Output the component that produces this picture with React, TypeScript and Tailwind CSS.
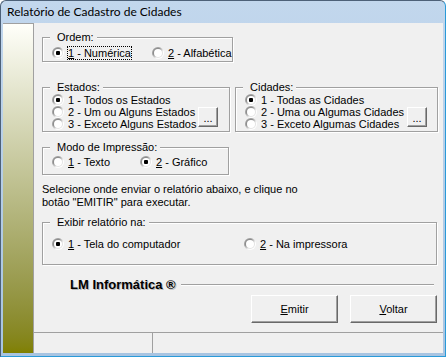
import React from "react";

function Radio({ checked }: { checked?: boolean }) {
  return (
    <svg width="12" height="12" viewBox="0 0 12 12" className="shrink-0">
      <defs>
        <linearGradient id="rOuter" x1="0" y1="0" x2="1" y2="1">
          <stop offset="0.35" stopColor="#a0a0a0" />
          <stop offset="0.65" stopColor="#ffffff" />
        </linearGradient>
        <linearGradient id="rInner" x1="0" y1="0" x2="1" y2="1">
          <stop offset="0.35" stopColor="#8c8c8c" />
          <stop offset="0.65" stopColor="#e3e3e3" />
        </linearGradient>
      </defs>
      <circle cx="6" cy="6" r="6" fill="url(#rOuter)" />
      <circle cx="6" cy="6" r="5" fill="url(#rInner)" />
      <circle cx="6" cy="6" r="4" fill="#fff" />
      {checked && <rect x="4" y="4" width="4" height="4" rx="1" fill="#000" />}
    </svg>
  );
}

function Option({ checked, className = "", children }: { checked?: boolean; className?: string; children: React.ReactNode }) {
  return (
    <div className={"flex items-center gap-[4px] " + className}>
      <Radio checked={checked} />
      <span className="whitespace-nowrap">{children}</span>
    </div>
  );
}

function Group({ title, className = "", children }: { title: string; className?: string; children: React.ReactNode }) {
  return (
    <fieldset className={"border border-[#a0a0a0] shadow-[inset_1px_1px_0_#fff,1px_1px_0_#fff] pl-[9px] " + className}>
      <legend className="-ml-[2px] pl-[7px] pr-[3px] bg-[#f0f0f0] leading-[13px]">{title}</legend>
      {children}
    </fieldset>
  );
}

function Btn({ className = "", children }: { className?: string; children: React.ReactNode }) {
  return (
    <div className={"flex items-center justify-center bg-[#f0f0f0] border border-t-white border-l-white border-r-[#696969] border-b-[#696969] shadow-[inset_-1px_-1px_0_#a0a0a0] " + className}>
      {children}
    </div>
  );
}

export default function App() {
  return (
    <div className="w-[446px] h-[357px] flex flex-col rounded-t-[6px] border border-[#4d6178] border-r-[#2a9ad8] border-b-[#2a9ad8] bg-gradient-to-b from-[#c2d7ed] to-[#a8c4e1] overflow-hidden">
      <div className="h-[22px] pl-[6px] flex items-center text-[12px] text-black font-['Lato',sans-serif]">
        Relatório de Cadastro de Cidades
      </div>
      <div className="flex-1 mx-[2px] mb-[3px] bg-[#f0f0f0] flex text-[11px] text-black font-['Liberation_Sans',Arial,sans-serif]">
        <div className="w-[31px] border-t border-r border-[#a0a0a0] bg-gradient-to-b from-[#fffffa] to-[#808000]" />
        <div className="flex-1 flex flex-col">
          <div className="flex-1 pl-[8px] flex flex-col items-start">
            <Group title="Ordem:" className="w-[190px] mt-[8px]">
              <div className="flex items-center h-[14px] mt-[2px] mb-[1px]">
                <Option checked className="w-[100px]">
                  <span className="outline outline-1 outline-dotted outline-black">
                    <u>1</u> - Numérica
                  </span>
                </Option>
                <Option>
                  <u>2</u> - Alfabética
                </Option>
              </div>
            </Group>

            <div className="flex gap-[5px] mt-[19px]">
              <Group title="Estados:" className="w-[188px] pr-[11px]">
                <div className="flex items-end mb-[1px]">
                  <div className="flex flex-col">
                    <Option checked className="h-[12px]">1 - Todos os Estados</Option>
                    <Option className="h-[12px]">2 - Um ou Alguns Estados</Option>
                    <Option className="h-[12px]">3 - Exceto Alguns Estados</Option>
                  </div>
                  <Btn className="ml-auto mb-[3px] w-[20px] h-[20px] leading-none pt-[3px]">...</Btn>
                </div>
              </Group>
              <Group title="Cidades:" className="w-[203px] pr-[10px]">
                <div className="flex items-end mb-[1px]">
                  <div className="flex flex-col">
                    <Option checked className="h-[12px]">1 - Todas as Cidades</Option>
                    <Option className="h-[12px]">2 - Uma ou Algumas Cidades</Option>
                    <Option className="h-[12px]">3 - Exceto Algumas Cidades</Option>
                  </div>
                  <Btn className="ml-auto mb-[3px] w-[20px] h-[20px] leading-none pt-[3px]">...</Btn>
                </div>
              </Group>
            </div>

            <Group title="Modo de Impressão:" className="w-[187px] mt-[9px]">
              <div className="flex items-center h-[14px] mt-[1px] mb-[5px]">
                <Option className="w-[88px]">
                  <u>1</u> - Texto
                </Option>
                <Option checked>
                  <u>2</u> - Gráfico
                </Option>
              </div>
            </Group>

            <p className="mt-[8px] leading-[13px]">
              Selecione onde enviar o relatório abaixo, e clique no
              <br />
              botão "EMITIR" para executar.
            </p>

            <Group title="Exibir relatório na:" className="w-[395px] mt-[7px]">
              <div className="flex items-center h-[14px] mt-[8px] mb-[13px]">
                <Option checked className="w-[192px]">
                  <u>1</u> - Tela do computador
                </Option>
                <Option>
                  <u>2</u> - Na impressora
                </Option>
              </div>
            </Group>

            <div className="flex items-center w-[392px] mt-[12px] pl-[28px] h-[15px]">
              <span className="text-[13px] font-bold whitespace-nowrap [text-shadow:1px_1px_0_#b8b8b8]">LM Informática ®</span>
              <div className="flex-1 ml-[5px] border-t border-[#a0a0a0] shadow-[0_1px_0_#fff]" />
            </div>

            <div className="flex gap-[12px] mt-[3px] w-[395px] justify-end">
              <Btn className="w-[87px] h-[28px]">
                <span>
                  <u>E</u>mitir
                </span>
              </Btn>
              <Btn className="w-[87px] h-[28px]">
                <span>
                  <u>V</u>oltar
                </span>
              </Btn>
            </div>
          </div>
          <div className="h-[21px] border-t border-[#a0a0a0] flex">
            <div className="w-[119px] border-r border-[#a0a0a0]" />
          </div>
        </div>
      </div>
    </div>
  );
}
